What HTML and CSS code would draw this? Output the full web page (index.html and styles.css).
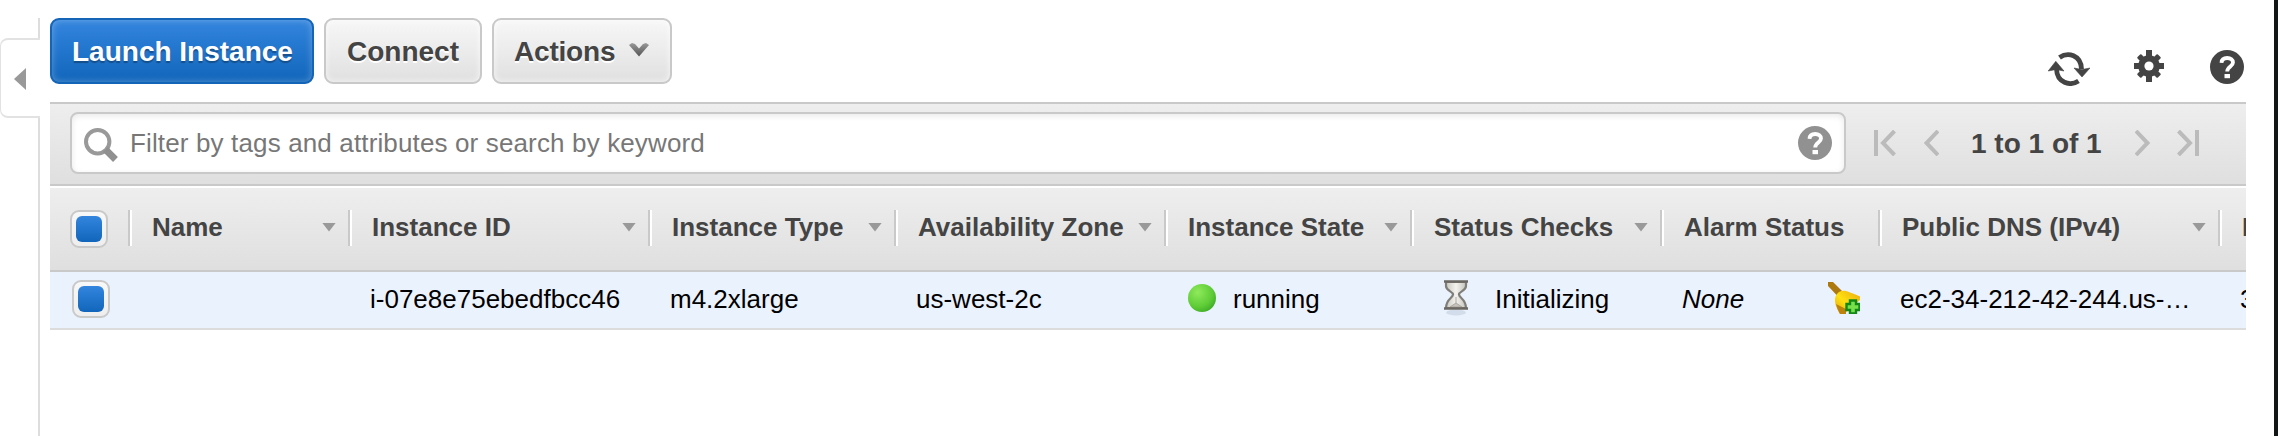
FILE: index.html
```html
<!DOCTYPE html>
<html lang="en">
<head>
<meta charset="utf-8">
<title>EC2 Instances</title>
<link rel="stylesheet" href="styles.css">
</head>
<body>
<div class="app">
  <aside class="rail">
    <div class="rail-top"></div>
    <div class="rail-tab"><svg width="12" height="22" viewBox="0 0 12 22"><path d="M12 0V22L0 11Z" fill="#999"/></svg></div>
    <div class="rail-rest"></div>
  </aside>
  <main class="main">
    <div class="toolbar">
      <button class="btn btn-primary"><span class="t-launch">Launch Instance</span></button>
      <button class="btn"><span class="t-connect">Connect</span></button>
      <button class="btn btn-actions"><span class="t-actions">Actions</span>
        <svg width="20" height="14" viewBox="0 0 20 14"><defs><linearGradient id="chev" x1="0" y1="0" x2="0" y2="1"><stop offset="0" stop-color="#999"/><stop offset="1" stop-color="#555"/></linearGradient></defs><path d="M0 2L3 0L6 1L10 5.500L14 1L17 0L20 2L10 13.500Z" fill="url(#chev)"/></svg>
      </button>
      <div class="tools">
        <svg class="i-refresh" width="42" height="34" viewBox="0 0 42 34"><g fill="none" stroke="#444" stroke-width="4.800"><path d="M11.500 5.500C20-0.500 33 3 33.500 17"/><path d="M30.500 29C22 34.500 9 31 8.500 17"/></g><path d="M26 16L34 17.500L42 16L34 25Z M.2 19L8 17.500L16 19L7.800 9.300Z" fill="#444" stroke="#444" stroke-width=".6"/></svg>
        <svg class="i-gear" width="30" height="32" viewBox="0 0 30 32"><g fill="#444"><circle cx="15" cy="16" r="10.800"/><rect x="12" y="0" width="6" height="32"/><rect x="0" y="13" width="30" height="6"/><g transform="rotate(45 15 16)"><rect x="12.200" y="1.600" width="5.600" height="28.800" rx="1"/><rect x=".6" y="13.200" width="28.800" height="5.600" rx="1"/></g></g><circle cx="15" cy="16" r="4.600" fill="#fff"/></svg>
        <svg class="i-help" width="34" height="34" viewBox="0 0 34 34"><circle cx="17" cy="17" r="17" fill="#444"/><path d="M11.500 12.800C11.700 9.300 14 8 17.200 8C20.800 8 23 9.800 23 12.400C23 16.400 17.200 16.500 17.200 21.500" fill="none" stroke="#fff" stroke-width="3.800"/><rect x="14.500" y="24" width="5.500" height="4.200" fill="#fff"/></svg>
      </div>
    </div>
    <div class="filterbar">
      <div class="search">
        <svg class="i-search" width="36" height="36" viewBox="0 0 36 36"><circle cx="14.700" cy="14.700" r="11.700" fill="none" stroke="#999" stroke-width="4"/><path d="M22.500 22.500L32.500 32.500" stroke="#909090" stroke-width="6.800"/></svg>
        <span class="placeholder">Filter by tags and attributes or search by keyword</span>
        <svg class="i-hint" width="34" height="34" viewBox="0 0 34 34"><circle cx="17" cy="17" r="17" fill="#919191"/><path d="M11.500 12.800C11.700 9.300 14 8 17.200 8C20.800 8 23 9.800 23 12.400C23 16.400 17.200 16.500 17.200 21.500" fill="none" stroke="#fff" stroke-width="3.800"/><rect x="14.500" y="24" width="5.500" height="4.200" fill="#fff"/></svg>
      </div>
      <div class="pager">
        <svg width="22" height="26" viewBox="0 0 22 26"><path d="M2 0V26M20.500 1L9 13L20.500 25" fill="none" stroke="#bbb" stroke-width="4"/></svg>
        <svg width="15" height="26" viewBox="0 0 15 26"><path d="M14 1L2.500 13L14 25" fill="none" stroke="#bbb" stroke-width="4"/></svg>
        <span class="range">1 to 1 of 1</span>
        <svg width="15" height="26" viewBox="0 0 15 26"><path d="M1 1L12.500 13L1 25" fill="none" stroke="#bbb" stroke-width="4"/></svg>
        <svg width="22" height="26" viewBox="0 0 22 26"><path d="M20 0V26M1.500 1L13 13L1.500 25" fill="none" stroke="#bbb" stroke-width="4"/></svg>
      </div>
    </div>
    <div class="grid head">
      <div class="c check"><i class="box"></i></div>
      <div class="c"><span>Name</span><i class="sort"></i></div>
      <div class="c"><span>Instance ID</span><i class="sort"></i></div>
      <div class="c"><span>Instance Type</span><i class="sort"></i></div>
      <div class="c"><span>Availability Zone</span><i class="sort"></i></div>
      <div class="c"><span>Instance State</span><i class="sort"></i></div>
      <div class="c"><span>Status Checks</span><i class="sort"></i></div>
      <div class="c"><span>Alarm Status</span></div>
      <div class="c"><span>Public DNS (IPv4)</span><i class="sort"></i></div>
      <div class="c last"><span>I</span></div>
    </div>
    <div class="grid row">
      <div class="c check"><i class="box"></i></div>
      <div class="c"></div>
      <div class="c"><span>i-07e8e75ebedfbcc46</span></div>
      <div class="c"><span>m4.2xlarge</span></div>
      <div class="c"><span>us-west-2c</span></div>
      <div class="c"><i class="dot"></i><span>running</span></div>
      <div class="c">
        <svg class="i-glass" width="28" height="38" viewBox="0 0 28 38"><defs><linearGradient id="glass" x1="0" x2="1" y1="0" y2="0"><stop offset="0" stop-color="#c9c7c0"/><stop offset=".5" stop-color="#f4f3ef"/><stop offset="1" stop-color="#c4c2bc"/></linearGradient></defs><ellipse cx="14" cy="33.500" rx="10" ry="3" fill="#d3dcea"/><path d="M4 3V7C4 12 11 12.500 11 15.500C11 19 4 20 4 29H24C24 20 17 19 17 15.500C17 12.500 24 12 24 7V3Z" fill="url(#glass)" stroke="#807e79" stroke-width="2.200"/><path d="M14 18V24L8 28H20L14 24" fill="#c5c2ba" stroke="#aaa79f"/><path d="M2 2.500H26M2 29.500H26" stroke="#6b6863" stroke-width="2.600"/></svg>
        <span>Initializing</span></div>
      <div class="c"><span class="r-none">None</span>
        <svg class="i-bell" width="32" height="32" viewBox="0 0 32 32"><defs><linearGradient id="bell" x1="0" y1="1" x2="1" y2="0"><stop offset="0" stop-color="#e0a010"/><stop offset=".45" stop-color="#ffe010"/><stop offset="1" stop-color="#e8ac10"/></linearGradient></defs><path d="M0 0H5L14 9L9.500 14L0 4Z" fill="#ad780d"/><path d="M9 12C12 8 17 8 22 10.500C26 12 29 13 32 14.500V18L16 32H12C10 28 7 24 7 18C7 16 7.500 14 9 12Z" fill="url(#bell)"/><path d="M8 22C9 26 10.500 29 12 32H18V27Z" fill="#bd820c"/><path d="M22 18.500H28V22H31.500V28H28V31.500H22V28H18.500V22H22Z" fill="#78e04b" stroke="#128816" stroke-width="2.400"/></svg>
      </div>
      <div class="c"><span>ec2-34-212-42-244.us-…</span></div>
      <div class="c last"><span>3</span></div>
    </div>
  </main>
  <div class="gutter"></div>
  <div class="edge"></div>
</div>
</body>
</html>
```
FILE: styles.css
```css
* { box-sizing: border-box; }
body { margin: 0; background: #fff; font-family: "Liberation Sans", Arial, sans-serif; font-size: 26px; color: #000; overflow: hidden; }
.app { display: flex; width: 2278px; height: 436px; }
svg { display: block; flex: none; }
span { white-space: nowrap; }

.rail { width: 40px; display: flex; flex-direction: column; padding-top: 18px; margin-right: 10px; }
.rail-top { height: 20px; border-right: 2px solid #ddd; }
.rail-tab { height: 80px; border: 2px solid #e2e2e2; border-width: 2px 0 2px 1px; border-radius: 8px 0 0 8px; padding: 28px 0 0 13px; }
.rail-rest { flex: 1; border-right: 2px solid #ddd; }

.main { width: 2196px; overflow: hidden; }
.gutter { width: 28px; }
.edge { width: 4px; background: #121617; }

.toolbar { height: 102px; padding-top: 18px; display: flex; align-items: flex-start; gap: 10px; }
.btn { height: 66px; width: 158px; border: 2px solid #c9c9c9; border-radius: 9px; background: linear-gradient(#f7f7f7, #e0e0e0); box-shadow: inset 0 0 6px rgba(255,255,255,.75); color: #444; font: bold 28px/32px "Liberation Sans", Arial, sans-serif; text-shadow: 0 2px 0 #fff; padding: 2px 0 0 21px; display: flex; align-items: center; text-align: left; }
.btn-primary { width: 264px; padding-left: 20px; border-color: #1464b8; background: linear-gradient(#3385dd, #1166bb); box-shadow: inset 0 0 7px rgba(255,255,255,.3); color: #fff; text-shadow: 0 2px 1px rgba(0,0,0,.3); }
.btn-actions { width: 180px; padding-left: 20px; }
.t-actions { letter-spacing: -0.2px; }
.btn-actions svg { margin: -5px 0 0 14px; }
.tools { margin-left: auto; display: flex; }
.i-refresh { margin: 34px 44px 0 0; }
.i-gear { margin: 32px 46px 0 0; }
.i-help { margin: 32px 2px 0 0; }

.filterbar { height: 84px; border: 2px solid #c9c9c9; border-width: 2px 0; background: linear-gradient(#eee, #dfdfdf); display: flex; padding: 8px 0 0 20px; }
.search { width: 1776px; height: 62px; border: 2px solid #c9c9c9; border-radius: 8px; background: #fff; box-shadow: inset 0 2px 6px rgba(0,0,0,.09); display: flex; }
.i-search { margin: 13px 0 0 11px; }
.placeholder { color: #777; line-height: 30px; margin: 14px 0 0 11px; letter-spacing: 0.14px; }
.i-hint { margin: 12px 12px 0 auto; }
.pager { display: flex; padding-top: 18px; margin-left: 28px; }
.pager svg:nth-of-type(2) { margin-left: 28px; }
.range { font-weight: bold; font-size: 28px; line-height: 32px; color: #444; width: 130px; margin: -2px 34px 0 32px; }
.pager svg:nth-of-type(4) { margin-left: 27px; }

.grid { display: grid; grid-template-columns: 78px 220px 300px 246px 270px 246px 250px 218px 340px 28px; }
.head { height: 86px; border-top: 2px solid #fff; border-bottom: 2px solid #c9c9c9; background: linear-gradient(#eee, #dfdfdf) padding-box; color: #444; font-weight: bold; padding-top: 22px; }
.head .c { height: 36px; display: flex; align-items: center; padding-left: 20px; border-left: 2px solid #c9c9c9; box-shadow: inset 2px 0 0 #fff; line-height: 30px; }
.head .c > span { margin-top: -2px; padding-left: 2px; }
.head .check { border: 0; box-shadow: none; padding: 2px 0 0 20px; }
.sort { margin: -2px 12px 0 auto; width: 14px; height: 9px; background: #999; clip-path: polygon(0 0, 100% 0, 50% 100%); }
.box { flex: none; width: 38px; height: 38px; border: 2px solid #c9c9c9; border-radius: 9px; padding: 4px; background: linear-gradient(#f8f8f8, #eee); }
.box::after { content: ""; display: block; height: 26px; border-radius: 6px; background: linear-gradient(#3385dd, #1166bb); }
.row { height: 58px; background: #eaf2fe; border-bottom: 2px solid #dcdcdc; }
.row .c { display: flex; align-items: flex-start; padding: 12px 0 0 22px; line-height: 30px; overflow: hidden; }
.row .check { padding: 8px 0 0 22px; }
.dot { width: 28px; height: 28px; border-radius: 50%; background: radial-gradient(circle at 35% 30%, #8fea5c, #5dcb35 55%, #25941b); margin: 0 17px 0 2px; }
.i-glass { margin: -5px 25px 0 10px; }
.r-none { font-style: italic; }
.i-bell { margin: -2px 0 0 auto; }
.row .c:nth-child(8) { padding-right: 18px; }
```
